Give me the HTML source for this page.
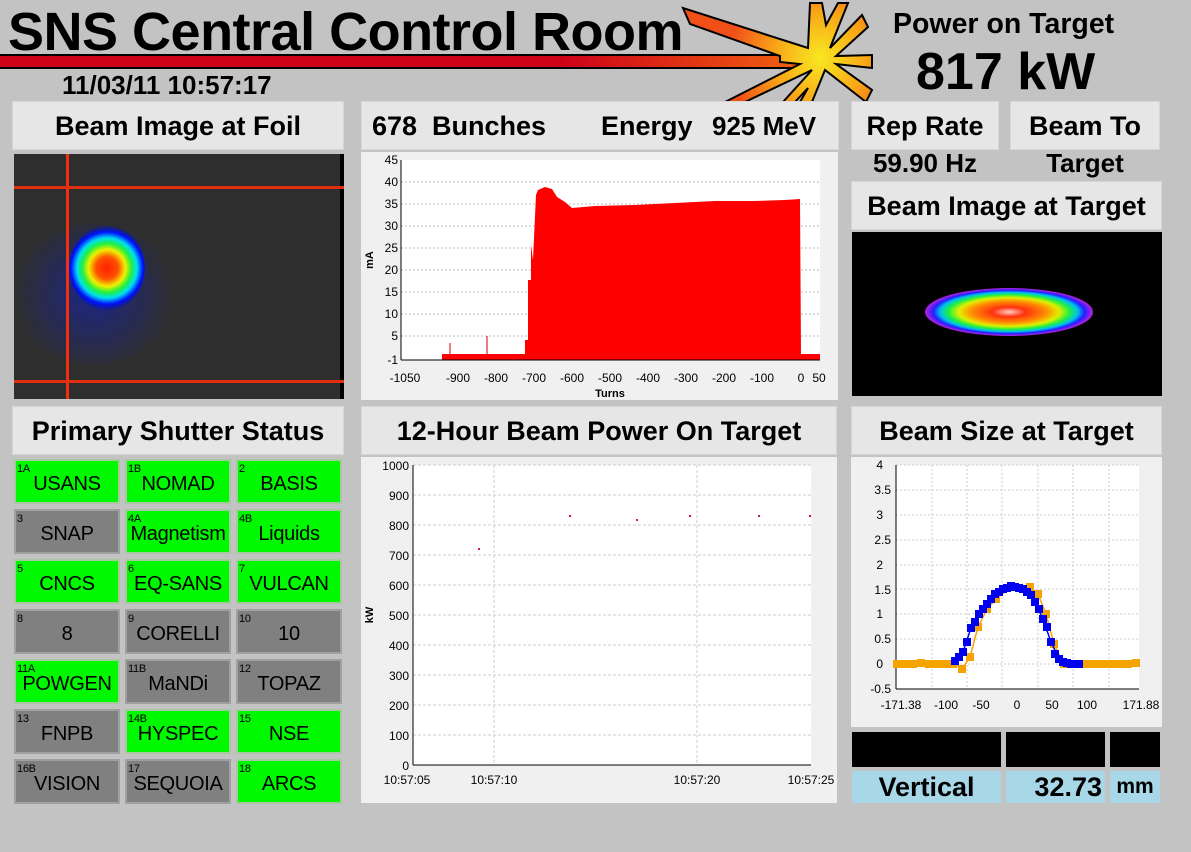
<!DOCTYPE html>
<html><head><meta charset="utf-8"><style>
*{margin:0;padding:0;box-sizing:border-box}
body{width:1191px;height:852px;background:#c3c3c3;position:relative;overflow:hidden;font-family:"Liberation Sans",Arial,sans-serif;font-weight:bold;color:#000}
svg{font-weight:normal}
.a{position:absolute}
.hdr{position:absolute;background:#e6e6e6;border:1px solid #d6d6d6;font-size:27px;text-align:center;line-height:48px;white-space:nowrap}
.cell{position:absolute;width:106px;height:45px;border:2px solid #9a9a9a;font-weight:normal;font-size:20px;text-align:center;line-height:46px;white-space:nowrap;letter-spacing:-0.3px}
.g{background:#00f800;border-color:#a8c8a0}
.y{background:#808080;border-color:#a0a0a0}
.cell i{position:absolute;left:1px;top:-15px;font-style:normal;font-size:11px}
.blk{position:absolute;background:#000}
.lb{position:absolute;background:#a8d8e8;font-size:27px;line-height:32px}
</style></head><body>

<svg class="a" style="left:0;top:0" width="880" height="105">
<defs>
<linearGradient id="bg" x1="0" x2="1"><stop offset="0" stop-color="#cc0018"/><stop offset="0.7" stop-color="#cc0018"/><stop offset="1" stop-color="#f06010"/></linearGradient>
<radialGradient id="sg" cx="820" cy="58" r="90" gradientUnits="userSpaceOnUse"><stop offset="0" stop-color="#f8e820"/><stop offset="0.5" stop-color="#f8a818"/><stop offset="1" stop-color="#f05018"/></radialGradient>
</defs>
<rect x="-2" y="55" width="800" height="13" fill="url(#bg)" stroke="#000" stroke-width="2"/>
<polygon fill="url(#sg)" stroke="#000" stroke-width="2" points="780,56 690,24 683,8 808,48 810,3 822,3 826,25 838,3 848,3 830,48 862,15 868,27 836,56 872,55 872,68 836,64 872,90 866,102 825,70 812,102 800,102 808,88 795,102 783,102 812,70 745,102 725,102 800,64 780,62"/>
</svg>
<div class="a" style="left:8px;top:1px;font-size:54px;letter-spacing:-0.5px;white-space:nowrap">SNS Central Control Room</div>
<div class="a" style="left:62px;top:70px;font-size:26px">11/03/11 10:57:17</div>
<div class="a" style="left:893px;top:8px;font-size:28.5px;white-space:nowrap">Power on Target</div>
<div class="a" style="left:916px;top:42px;font-size:52px;white-space:nowrap">817 kW</div>

<!-- Foil -->
<div class="hdr" style="left:12px;top:101px;width:332px;height:49px">Beam Image at Foil</div>
<svg class="a" style="left:14px;top:154px" width="330" height="245">
<defs><radialGradient id="fb" cx="93" cy="114" r="44" gradientUnits="userSpaceOnUse">
<stop offset="0" stop-color="#ff2000"/><stop offset="0.25" stop-color="#ff5000"/><stop offset="0.42" stop-color="#f0f000"/><stop offset="0.56" stop-color="#20f040"/><stop offset="0.68" stop-color="#00e0f0"/><stop offset="0.82" stop-color="#0010ff"/><stop offset="1" stop-color="#0010a0" stop-opacity="0"/></radialGradient>
<radialGradient id="fh" cx="80" cy="140" r="80" gradientUnits="userSpaceOnUse"><stop offset="0" stop-color="#1020c0" stop-opacity="0.6"/><stop offset="1" stop-color="#1020c0" stop-opacity="0"/></radialGradient></defs>
<rect width="330" height="245" fill="#2e2e2e"/>
<rect x="326" width="4" height="245" fill="#000"/>
<ellipse cx="80" cy="140" rx="80" ry="70" fill="url(#fh)"/>
<ellipse cx="93" cy="114" rx="38" ry="42" fill="url(#fb)"/>
<rect x="52" y="0" width="3" height="245" fill="#f03010"/>
<rect x="0" y="32" width="330" height="3" fill="#e03010"/>
<rect x="0" y="226" width="330" height="3" fill="#e03010"/>
</svg>

<!-- Bunches -->
<div class="hdr" style="left:361px;top:101px;width:478px;height:49px;text-align:left"><span class="a" style="left:10px">678&nbsp;&nbsp;Bunches</span><span class="a" style="left:239px">Energy</span><span class="a" style="left:350px;font-size:26px">925 MeV</span></div>
<div class="a" style="left:361px;top:152px;width:477px;height:248px;background:#f0f0f0"></div>
<svg class="a" style="left:355px;top:150px" width="480" height="250" font-family="Liberation Sans" font-size="12">
<rect x="46" y="10" width="419" height="200" fill="#fff"/>
<g stroke="#bbb" stroke-dasharray="2,2">
<line x1="46" x2="465" y1="32" y2="32"/><line x1="46" x2="465" y1="54" y2="54"/><line x1="46" x2="465" y1="76" y2="76"/><line x1="46" x2="465" y1="98" y2="98"/><line x1="46" x2="465" y1="120" y2="120"/><line x1="46" x2="465" y1="142" y2="142"/><line x1="46" x2="465" y1="164" y2="164"/><line x1="46" x2="465" y1="186" y2="186"/></g>
<path fill="#ff0000" d="M87,210 L87,204 L170,204 L170,190 L173,190 L173,130 L176,130 L176,95 L178,110 L181,45 L183,40 L190,37 L197,39 L202,47 L210,52 L217,58 L240,56 L280,55 L320,53 L360,51 L400,51 L430,50 L445,49 L446,204 L465,204 L465,210 Z"/>
<line x1="95" x2="95" y1="204" y2="193" stroke="#c00"/><line x1="132" x2="132" y1="204" y2="186" stroke="#c00"/>
<line x1="46" x2="46" y1="10" y2="210" stroke="#000"/><line x1="46" x2="465" y1="210" y2="210" stroke="#000"/>
<g text-anchor="end"><text x="43" y="14">45</text><text x="43" y="36">40</text><text x="43" y="58">35</text><text x="43" y="80">30</text><text x="43" y="102">25</text><text x="43" y="124">20</text><text x="43" y="146">15</text><text x="43" y="168">10</text><text x="43" y="190">5</text><text x="43" y="214">-1</text></g>
<g text-anchor="middle"><text x="50" y="232">-1050</text><text x="103" y="232">-900</text><text x="141" y="232">-800</text><text x="179" y="232">-700</text><text x="217" y="232">-600</text><text x="255" y="232">-500</text><text x="293" y="232">-400</text><text x="331" y="232">-300</text><text x="369" y="232">-200</text><text x="407" y="232">-100</text><text x="446" y="232">0</text><text x="464" y="232">50</text></g>
<text x="255" y="247" text-anchor="middle" font-weight="bold" font-size="11">Turns</text>
<text transform="translate(18,110) rotate(-90)" text-anchor="middle" font-weight="bold" font-size="11">mA</text>
</svg>

<!-- Rep rate -->
<div class="hdr" style="left:851px;top:101px;width:148px;height:49px">Rep Rate</div>
<div class="hdr" style="left:1010px;top:101px;width:150px;height:49px">Beam To</div>
<div class="a" style="left:851px;top:148px;width:148px;text-align:center;font-size:26px">59.90 Hz</div>
<div class="a" style="left:1010px;top:148px;width:150px;text-align:center;font-size:26px">Target</div>
<div class="hdr" style="left:851px;top:181px;width:311px;height:49px">Beam Image at Target</div>
<svg class="a" style="left:852px;top:232px" width="310" height="164">
<defs><radialGradient id="tg" cx="0.5" cy="0.5" r="0.5">
<stop offset="0" stop-color="#ffd0c0"/><stop offset="0.2" stop-color="#ff3010"/><stop offset="0.45" stop-color="#ff9000"/><stop offset="0.6" stop-color="#e0f000"/><stop offset="0.72" stop-color="#20f040"/><stop offset="0.82" stop-color="#00c0f0"/><stop offset="0.9" stop-color="#2020ff"/><stop offset="1" stop-color="#c020e0"/></radialGradient></defs>
<rect width="310" height="164" fill="#000"/>
<ellipse cx="157" cy="80" rx="84" ry="24" fill="url(#tg)"/>
</svg>

<!-- Shutters -->
<div class="hdr" style="left:12px;top:406px;width:332px;height:49px">Primary Shutter Status</div>
<div class="cell g" style="left:14px;top:459px"><i>1A</i>USANS</div>
<div class="cell g" style="left:125px;top:459px"><i>1B</i>NOMAD</div>
<div class="cell g" style="left:236px;top:459px"><i>2</i>BASIS</div>
<div class="cell y" style="left:14px;top:509px"><i>3</i>SNAP</div>
<div class="cell g" style="left:125px;top:509px"><i>4A</i>Magnetism</div>
<div class="cell g" style="left:236px;top:509px"><i>4B</i>Liquids</div>
<div class="cell g" style="left:14px;top:559px"><i>5</i>CNCS</div>
<div class="cell g" style="left:125px;top:559px"><i>6</i>EQ-SANS</div>
<div class="cell g" style="left:236px;top:559px"><i>7</i>VULCAN</div>
<div class="cell y" style="left:14px;top:609px"><i>8</i>8</div>
<div class="cell y" style="left:125px;top:609px"><i>9</i>CORELLI</div>
<div class="cell y" style="left:236px;top:609px"><i>10</i>10</div>
<div class="cell g" style="left:14px;top:659px"><i>11A</i>POWGEN</div>
<div class="cell y" style="left:125px;top:659px"><i>11B</i>MaNDi</div>
<div class="cell y" style="left:236px;top:659px"><i>12</i>TOPAZ</div>
<div class="cell y" style="left:14px;top:709px"><i>13</i>FNPB</div>
<div class="cell g" style="left:125px;top:709px"><i>14B</i>HYSPEC</div>
<div class="cell g" style="left:236px;top:709px"><i>15</i>NSE</div>
<div class="cell y" style="left:14px;top:759px"><i>16B</i>VISION</div>
<div class="cell y" style="left:125px;top:759px"><i>17</i>SEQUOIA</div>
<div class="cell g" style="left:236px;top:759px"><i>18</i>ARCS</div>

<!-- 12 hour -->
<div class="hdr" style="left:361px;top:406px;width:476px;height:49px">12-Hour Beam Power On Target</div>
<svg class="a" style="left:361px;top:457px" width="476" height="346" font-family="Liberation Sans" font-size="12">
<rect width="476" height="346" fill="#f0f0f0"/>
<rect x="52" y="8" width="398" height="300" fill="#fff"/>
<g stroke="#ccc" stroke-dasharray="3,2">
<line x1="52" x2="450" y1="38" y2="38"/><line x1="52" x2="450" y1="68" y2="68"/><line x1="52" x2="450" y1="98" y2="98"/><line x1="52" x2="450" y1="128" y2="128"/><line x1="52" x2="450" y1="158" y2="158"/><line x1="52" x2="450" y1="188" y2="188"/><line x1="52" x2="450" y1="218" y2="218"/><line x1="52" x2="450" y1="248" y2="248"/><line x1="52" x2="450" y1="278" y2="278"/>
<line x1="133" x2="133" y1="8" y2="308"/><line x1="336" x2="336" y1="8" y2="308"/><line x1="52" x2="450" y1="8" y2="8"/></g>
<line x1="52" x2="52" y1="8" y2="308" stroke="#000"/><line x1="52" x2="450" y1="308" y2="308" stroke="#000"/>
<g fill="#d02050"><rect x="117" y="91" width="2" height="2"/><rect x="208" y="58" width="2" height="2"/><rect x="275" y="62" width="2" height="2"/><rect x="328" y="58" width="2" height="2"/><rect x="397" y="58" width="2" height="2"/><rect x="448" y="58" width="2" height="2"/></g>
<g text-anchor="end"><text x="48" y="13">1000</text><text x="48" y="43">900</text><text x="48" y="73">800</text><text x="48" y="103">700</text><text x="48" y="133">600</text><text x="48" y="163">500</text><text x="48" y="193">400</text><text x="48" y="223">300</text><text x="48" y="253">200</text><text x="48" y="283">100</text><text x="48" y="313">0</text></g>
<g text-anchor="middle"><text x="46" y="327">10:57:05</text><text x="133" y="327">10:57:10</text><text x="336" y="327">10:57:20</text><text x="450" y="327">10:57:25</text></g>
<text transform="translate(12,158) rotate(-90)" text-anchor="middle" font-weight="bold" font-size="11">kW</text>
</svg>

<!-- Beam size -->
<div class="hdr" style="left:851px;top:406px;width:311px;height:49px">Beam Size at Target</div>
<svg class="a" style="left:851px;top:457px" width="311" height="270" font-family="Liberation Sans" font-size="12">
<rect width="311" height="270" fill="#f0f0f0"/>
<rect x="45" y="8" width="243" height="224" fill="#fff"/>
<g stroke="#ccc" stroke-dasharray="2,2">
<line x1="45" x2="288" y1="33" y2="33"/><line x1="45" x2="288" y1="58" y2="58"/><line x1="45" x2="288" y1="83" y2="83"/><line x1="45" x2="288" y1="108" y2="108"/><line x1="45" x2="288" y1="132" y2="132"/><line x1="45" x2="288" y1="157" y2="157"/><line x1="45" x2="288" y1="182" y2="182"/><line x1="45" x2="288" y1="207" y2="207"/><line x1="45" x2="288" y1="8" y2="8"/>
<line x1="81" x2="81" y1="8" y2="232"/><line x1="116" x2="116" y1="8" y2="232"/><line x1="151" x2="151" y1="8" y2="232"/><line x1="187" x2="187" y1="8" y2="232"/><line x1="222" x2="222" y1="8" y2="232"/><line x1="258" x2="258" y1="8" y2="232"/></g>
<line x1="45" x2="45" y1="8" y2="232" stroke="#000"/><line x1="45" x2="288" y1="232" y2="232" stroke="#000"/>
<g transform="translate(-851,-457)">
<polyline fill="none" stroke="#f5a300" stroke-width="1.5" points="896,664 955,664 962,669 970,657 978,627 987,609 996,599 1005,592 1012,589 1030,587 1038,594 1046,614 1054,644 1062,661 1070,664 1139,664"/>
<g fill="#f5a300"><rect x="893" y="660" width="8" height="8"/><rect x="901" y="660" width="8" height="8"/><rect x="909" y="660" width="8" height="8"/><rect x="917" y="659" width="8" height="8"/><rect x="925" y="660" width="8" height="8"/><rect x="933" y="660" width="8" height="8"/><rect x="941" y="660" width="8" height="8"/><rect x="949" y="660" width="8" height="8"/><rect x="958" y="665" width="8" height="8"/><rect x="966" y="653" width="8" height="8"/><rect x="974" y="623" width="8" height="8"/><rect x="983" y="605" width="8" height="8"/><rect x="992" y="595" width="8" height="8"/><rect x="1026" y="583" width="8" height="8"/><rect x="1034" y="590" width="8" height="8"/><rect x="1042" y="610" width="8" height="8"/><rect x="1050" y="640" width="8" height="8"/><rect x="1060" y="660" width="8" height="8"/><rect x="1068" y="660" width="8" height="8"/><rect x="1076" y="660" width="8" height="8"/><rect x="1084" y="660" width="8" height="8"/><rect x="1092" y="660" width="8" height="8"/><rect x="1100" y="660" width="8" height="8"/><rect x="1108" y="660" width="8" height="8"/><rect x="1116" y="660" width="8" height="8"/><rect x="1124" y="660" width="8" height="8"/><rect x="1132" y="659" width="8" height="8"/></g>
<polyline fill="none" stroke="#0000f0" stroke-width="1.5" points="955,661 963,652 971,628 979,614 991,599 1003,589 1011,586 1023,589 1035,602 1043,619 1051,642 1059,659 1071,664 1079,664"/>
<g fill="#0000f0"><rect x="951" y="657" width="8" height="8"/><rect x="955" y="653" width="8" height="8"/><rect x="959" y="648" width="8" height="8"/><rect x="963" y="638" width="8" height="8"/><rect x="967" y="624" width="8" height="8"/><rect x="971" y="618" width="8" height="8"/><rect x="975" y="610" width="8" height="8"/><rect x="979" y="605" width="8" height="8"/><rect x="983" y="600" width="8" height="8"/><rect x="987" y="595" width="8" height="8"/><rect x="991" y="590" width="8" height="8"/><rect x="995" y="588" width="8" height="8"/><rect x="999" y="585" width="8" height="8"/><rect x="1003" y="584" width="8" height="8"/><rect x="1007" y="582" width="8" height="8"/><rect x="1011" y="583" width="8" height="8"/><rect x="1015" y="584" width="8" height="8"/><rect x="1019" y="585" width="8" height="8"/><rect x="1023" y="588" width="8" height="8"/><rect x="1027" y="591" width="8" height="8"/><rect x="1031" y="598" width="8" height="8"/><rect x="1035" y="605" width="8" height="8"/><rect x="1039" y="615" width="8" height="8"/><rect x="1043" y="623" width="8" height="8"/><rect x="1047" y="638" width="8" height="8"/><rect x="1051" y="650" width="8" height="8"/><rect x="1055" y="655" width="8" height="8"/><rect x="1059" y="658" width="8" height="8"/><rect x="1063" y="659" width="8" height="8"/><rect x="1067" y="660" width="8" height="8"/><rect x="1071" y="660" width="8" height="8"/><rect x="1075" y="660" width="8" height="8"/></g>
</g>
<g text-anchor="end"><text x="32" y="12">4</text><text x="40" y="37">3.5</text><text x="32" y="62">3</text><text x="40" y="87">2.5</text><text x="32" y="112">2</text><text x="40" y="137">1.5</text><text x="32" y="161">1</text><text x="40" y="186">0.5</text><text x="32" y="211">0</text><text x="40" y="236">-0.5</text></g>
<g text-anchor="middle"><text x="50" y="252">-171.38</text><text x="95" y="252">-100</text><text x="130" y="252">-50</text><text x="166" y="252">0</text><text x="201" y="252">50</text><text x="236" y="252">100</text><text x="290" y="252">171.88</text></g>
</svg>
<div class="blk" style="left:852px;top:732px;width:149px;height:35px"></div>
<div class="blk" style="left:1006px;top:732px;width:99px;height:35px"></div>
<div class="blk" style="left:1110px;top:732px;width:50px;height:35px"></div>
<div class="lb" style="left:852px;top:771px;width:149px;text-align:center">Vertical</div>
<div class="lb" style="left:1006px;top:771px;width:99px;text-align:right;padding-right:3px">32.73</div>
<div class="lb" style="left:1110px;top:771px;width:50px;text-align:center;font-size:21px">mm</div>
</body></html>
